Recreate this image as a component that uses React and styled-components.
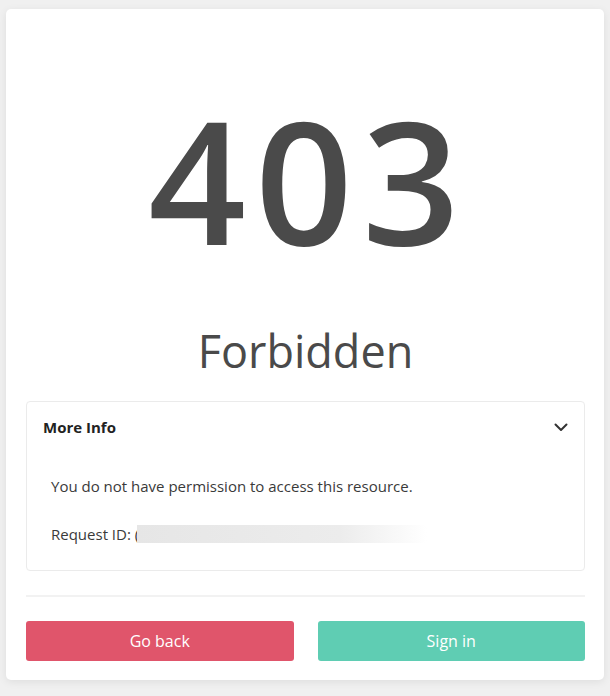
import React, {useState} from 'react';
import styled, {createGlobalStyle} from 'styled-components';

const GlobalStyle = createGlobalStyle`
  html, body {
    margin: 0;
    padding: 0;
    background: #f0f0f0;
    font-family: "Open Sans", "Noto Sans", sans-serif;
    color: #333;
  }
`

const Page = styled.div`
  padding: 9px 6px 16px 6px;
`

const Card = styled.div`
  background: #fff;
  border-radius: 5px;
  box-shadow: 0 2px 8px rgba(0, 0, 0, 0.08);
  padding: 0 19px 19px 20px;
  display: flex;
  flex-direction: column;
`

const Code = styled.h1`
  margin: 0;
  padding-top: 67px;
  font-size: 171px;
  line-height: 206px;
  font-weight: 600;
  color: #4a4a4a;
  text-align: center;
  letter-spacing: 9px;
  text-indent: 6px;
`

const Title = styled.h2`
  margin: 38px 0 0 0;
  font-size: 45px;
  line-height: 61px;
  font-weight: 400;
  color: #4a4a4a;
  text-align: center;
`

const Details = styled.div`
  margin-top: 20px;
  border: 1px solid #ebebeb;
  border-radius: 4px;
`

const DetailsHeader = styled.button`
  width: 100%;
  height: 50px;
  display: flex;
  align-items: center;
  justify-content: space-between;
  padding: 0 16px 0 16px;
  background: none;
  border: none;
  cursor: pointer;
  font-family: inherit;
  font-size: 15px;
  font-weight: 700;
  color: #222;
`

const DetailsBody = styled.div`
  padding: 22px 24px 24px 24px;
  display: flex;
  flex-direction: column;
  gap: 24px;
`

const Line = styled.p`
  margin: 0;
  font-size: 15px;
  line-height: 24px;
  color: #3a3a3a;
  display: flex;
  align-items: center;
`

const Redacted = styled.span`
  display: inline-block;
  width: 290px;
  height: 18px;
  margin-left: -2px;
  background: linear-gradient(90deg, #e6e6e6 0%, #ececec 70%, rgba(240, 240, 240, 0) 100%);
`

const Divider = styled.hr`
  margin: 24px 0 0 0;
  border: none;
  height: 2px;
  background: #f2f2f2;
`

const Actions = styled.div`
  margin-top: 24px;
  display: grid;
  grid-template-columns: 1fr 1fr;
  gap: 24px;
`

const ActionButton = styled.button`
  height: 40px;
  border: none;
  border-radius: 3px;
  background: ${props => props.color};
  color: #fff;
  font-family: inherit;
  font-size: 16px;
  cursor: pointer;
`

function Chevron() {
  return (
    <svg width="14" height="9" viewBox="0 0 14 9" fill="none">
      <path d="M1.5 1.5 L7 7 L12.5 1.5" stroke="#333" strokeWidth="2" strokeLinecap="round" strokeLinejoin="round"/>
    </svg>
  )
}

export default function App() {
  const [open, setOpen] = useState(true);

  return (
    <Page>
      <GlobalStyle/>
      <Card>
        <Code>403</Code>
        <Title>Forbidden</Title>
        <Details>
          <DetailsHeader onClick={() => setOpen(!open)}>
            <span>More Info</span>
            <Chevron/>
          </DetailsHeader>
          {open &&
          <DetailsBody>
            <Line>You do not have permission to access this resource.</Line>
            <Line>Request ID:&nbsp;(<Redacted/></Line>
          </DetailsBody>
          }
        </Details>
        <Divider/>
        <Actions>
          <ActionButton color="#e0556b">Go back</ActionButton>
          <ActionButton color="#5fcdb3">Sign in</ActionButton>
        </Actions>
      </Card>
    </Page>
  )
}
